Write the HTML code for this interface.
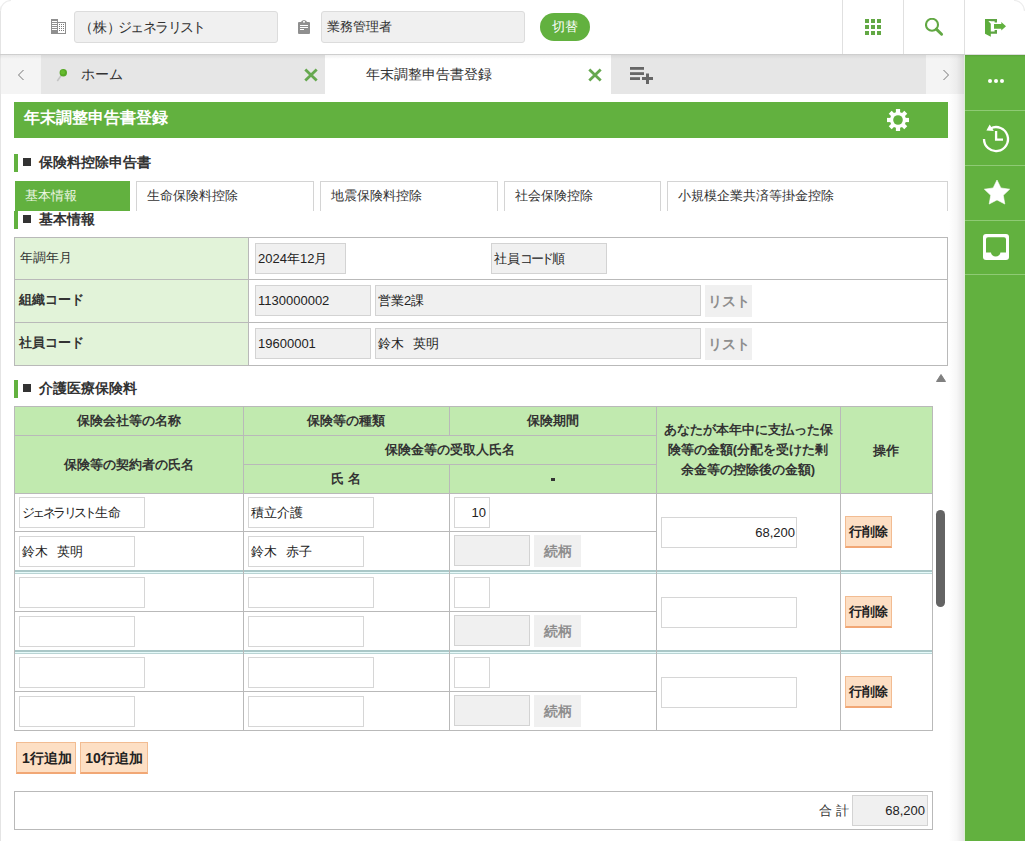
<!DOCTYPE html>
<html><head><meta charset="utf-8">
<style>
*{box-sizing:border-box;margin:0;padding:0}
html,body{width:1025px;height:841px;overflow:hidden;background:#fff}
body{font-family:"Liberation Sans",sans-serif;color:#333;font-size:13px;position:relative}
.a{position:absolute}
.t{position:absolute;white-space:nowrap;line-height:1}
/* header */
#hdr{left:0;top:0;width:1025px;height:54px;background:#fff}
.hbox{background:#f0f0f0;border:1px solid #dcdcdc;border-radius:3px;height:32px;top:11px}
.vsep{top:0;width:1px;height:54px;background:#e0e0e0}
/* tabbar */
#tabbar{left:0;top:54px;width:965px;height:40px;background:#e6e6e6}
/* sidebar */
#side{left:965px;top:55px;width:60px;height:786px;background:#62b13f}
.ssep{left:0;width:60px;height:1px;background:#8fca75}
/* content */
.green{background:#62b13f}
.secbar{width:4px;height:18px;background:#62b13f}
.sq{width:8px;height:8px;background:#333}
.sec{font-size:14px;font-weight:bold;color:#333}
.tab{top:181px;height:30px;border:1px solid #d4d4d4;border-bottom:none;background:#fff}
.tb{border-collapse:collapse}
.inp{position:absolute;height:30px;border:1px solid #d6d6d6;background:#fff}
.ginp{position:absolute;height:30px;border:1px solid #d3d3d3;background:#f0f0f0}
.gbtn{position:absolute;height:31px;background:#f0f0f0;color:#999;font-weight:bold;font-size:14px}
.pbtn{position:absolute;background:#fddfc4;border:1px solid #f2bc92;border-bottom:2px solid #f1a775;font-weight:bold;color:#222;font-size:14px}
.hline{position:absolute;height:1px;background:#b9b9b9}
.vline{position:absolute;width:1px;background:#b9b9b9;z-index:1}
.dbl{position:absolute;height:4px;border-top:2px solid #aac7c7;border-bottom:1px solid #b9d4d4;background:#e6fafa}
</style></head><body>

<!-- HEADER -->
<div id="hdr" class="a"></div>
<div class="a" style="left:0;top:0;width:1px;height:841px;background:#e4e4e4"></div>

<!-- company icon -->
<svg class="a" style="left:51px;top:19px" width="16" height="16" viewBox="0 0 16 16" shape-rendering="crispEdges">
<rect x="0" y="0" width="7" height="15" fill="#8f8f8f"/>
<g fill="#fff"><rect x="1" y="2" width="5" height="1"/><rect x="1" y="4" width="5" height="1"/><rect x="1" y="6" width="5" height="1"/><rect x="1" y="8" width="5" height="1"/><rect x="1" y="10" width="5" height="1"/></g>
<path d="M7 3H15V15H7Z M7 4V14H14V4Z" fill="#8f8f8f" fill-rule="evenodd"/>
<g fill="#7a7a7a"><rect x="8" y="5" width="1" height="1"/><rect x="10" y="5" width="1" height="1"/><rect x="12" y="5" width="1" height="1"/><rect x="8" y="7" width="1" height="1"/><rect x="10" y="7" width="1" height="1"/><rect x="12" y="7" width="1" height="1"/><rect x="8" y="9" width="1" height="1"/><rect x="10" y="9" width="1" height="1"/><rect x="12" y="9" width="1" height="1"/><rect x="8" y="11" width="1" height="1"/><rect x="10" y="11" width="1" height="1"/><rect x="12" y="11" width="1" height="1"/></g>
</svg>
<div class="a hbox" style="left:74px;width:204px"></div>
<div class="t" style="left:79px;top:20px;font-size:14px;color:#333">（株）<span style="letter-spacing:-1.6px;margin-left:-3px">ジェネラリスト</span></div>

<!-- clipboard icon -->
<svg class="a" style="left:298px;top:20px" width="12" height="14" viewBox="0 0 12 14">
<rect x="0" y="2" width="12" height="12" rx="1" fill="#8f8f8f"/>
<path d="M2.6 2.6Q3.6 0 6 0Q8.4 0 9.4 2.6Z" fill="#8f8f8f"/>
<rect x="5.1" y="1" width="1.8" height="1.6" fill="#fff"/>
<g fill="#fff" shape-rendering="crispEdges"><rect x="2" y="5" width="8" height="1"/><rect x="2" y="7" width="8" height="1"/><rect x="2" y="9" width="4" height="1"/></g>
</svg>
<div class="a hbox" style="left:321px;width:204px"></div>
<div class="t" style="left:327px;top:20px;font-size:13px;color:#333">業務管理者</div>

<div class="a" style="left:540px;top:13px;width:50px;height:28px;border-radius:14px;background:#62b13f"></div>
<div class="t" style="left:552px;top:20px;font-size:13px;color:#fff">切替</div>

<div class="a vsep" style="left:842px"></div>
<div class="a vsep" style="left:903px"></div>
<div class="a vsep" style="left:964px"></div>

<!-- grid icon -->
<svg class="a" style="left:865px;top:19px" width="16" height="16" viewBox="0 0 16 16" fill="#62a844">
<rect x="0" y="0" width="4" height="4"/><rect x="6" y="0" width="4" height="4"/><rect x="12" y="0" width="4" height="4"/>
<rect x="0" y="6" width="4" height="4"/><rect x="6" y="6" width="4" height="4"/><rect x="12" y="6" width="4" height="4"/>
<rect x="0" y="12" width="4" height="4"/><rect x="6" y="12" width="4" height="4"/><rect x="12" y="12" width="4" height="4"/>
</svg>
<!-- search icon -->
<svg class="a" style="left:925px;top:18px" width="19" height="19" viewBox="0 0 19 19">
<circle cx="7" cy="6.8" r="6" fill="none" stroke="#62a844" stroke-width="2.1"/>
<line x1="11.3" y1="11.1" x2="16.6" y2="16.3" stroke="#62a844" stroke-width="2.9" stroke-linecap="round"/>
</svg>
<!-- exit icon -->
<svg class="a" style="left:985px;top:19px" width="22" height="19" viewBox="0 0 22 19">
<path d="M0 0H12V3.6H9.6V2.3H2V12.4H9.6V11H12V14.7H4Z" fill="#5ea443"/><path d="M2 2.3H5.8V4.8Z" fill="#fff"/>
<path d="M0 0H1.6L5.8 4.8V17.7L0 14.7Z" fill="#5cac3c"/>
<path d="M9 5H16.3V3L21 7.3L16.3 11.6V9.7H9Z" fill="#62b13f"/>
</svg>
<!-- TABBAR -->
<div id="tabbar" class="a"></div>
<div class="a" style="left:1px;top:55px;width:40px;height:39px;background:#f4f4f4"></div>
<svg class="a" style="left:17px;top:69px" width="8" height="12" viewBox="0 0 8 12"><path d="M6.5 1L1.5 6L6.5 11" fill="none" stroke="#777" stroke-width="1"/></svg>
<!-- pin -->
<svg class="a" style="left:56px;top:68px" width="13" height="14" viewBox="0 0 13 14">
<line x1="1.3" y1="13" x2="5.5" y2="7" stroke="#c4c4c4" stroke-width="1.6"/>
<circle cx="7.3" cy="4.8" r="3.7" fill="#56a825"/><circle cx="6.8" cy="4.2" r="2.2" fill="#66bb2e"/>
</svg>
<div class="t" style="left:81px;top:67px;font-size:14px;color:#333">ホーム</div>
<svg class="a" style="left:304px;top:68px" width="14" height="14" viewBox="0 0 14 14"><path d="M1.3 1.5L12.7 12.5M12.7 1.5L1.3 12.5" stroke="#66a84f" stroke-width="2.8"/></svg>
<div class="a" style="left:325px;top:55px;width:286px;height:39px;background:#fff"></div>
<div class="t" style="left:366px;top:67px;font-size:14px;color:#333">年末調整申告書登録</div>
<svg class="a" style="left:588px;top:68px" width="14" height="14" viewBox="0 0 14 14"><path d="M1.3 1.5L12.7 12.5M12.7 1.5L1.3 12.5" stroke="#66a84f" stroke-width="2.8"/></svg>
<!-- add tab icon -->
<svg class="a" style="left:630px;top:67px" width="23" height="17" viewBox="0 0 23 17" fill="#666">
<rect x="0" y="0" width="14" height="2.8"/><rect x="0" y="5.2" width="14" height="2.8"/><rect x="0" y="10.2" width="10" height="2.8"/>
<rect x="12" y="10" width="11" height="3"/><rect x="16" y="6.5" width="3" height="10.5"/>
</svg>
<div class="a" style="left:926px;top:55px;width:39px;height:39px;background:#f4f4f4"></div>
<svg class="a" style="left:942px;top:69px" width="8" height="12" viewBox="0 0 8 12"><path d="M1.5 1L6.5 6L1.5 11" fill="none" stroke="#777" stroke-width="1"/></svg>

<div class="a" style="left:0;top:54px;width:965px;height:5px;background:linear-gradient(rgba(0,0,0,0.13),rgba(0,0,0,0.05) 30%,rgba(0,0,0,0))"></div>
<!-- SIDEBAR -->
<div class="a" style="left:949px;top:55px;width:15px;height:786px;background:linear-gradient(90deg,rgba(0,0,0,0),rgba(0,0,0,0.03) 50%,rgba(0,0,0,0.11))"></div>
<div class="a" style="left:964px;top:55px;width:1px;height:786px;background:#dcefd4"></div>
<div id="side" class="a">
 <div class="a ssep" style="top:55px"></div>
 <div class="a ssep" style="top:110px"></div>
 <div class="a ssep" style="top:165px"></div>
 <div class="a ssep" style="top:219px"></div>
</div>
<svg class="a" style="left:988px;top:79px" width="16" height="4" viewBox="0 0 16 4" fill="#fff"><circle cx="2" cy="2" r="2"/><circle cx="8" cy="2" r="2"/><circle cx="14" cy="2" r="2"/></svg>
<svg class="a" style="left:978px;top:118px" width="36" height="40" viewBox="0 0 36 40">
<path d="M6 21A12 12 0 1 0 12.5 10.4" fill="none" stroke="#fff" stroke-width="2.3"/>
<path d="M11.7 6.5L8.4 12.6L15.8 13Z" fill="#fff"/>
<path d="M18.1 13V21.7H25" fill="none" stroke="#fff" stroke-width="2.3"/>
</svg>
<svg class="a" style="left:984px;top:180px" width="26" height="25" viewBox="0 0 26 25"><polygon points="13.00,0.00 16.88,7.96 25.65,9.19 19.28,15.34 20.82,24.06 13.00,19.90 5.18,24.06 6.72,15.34 0.35,9.19 9.12,7.96" fill="#fff" stroke="#fff" stroke-width="0.6" stroke-linejoin="round"/></svg>
<svg class="a" style="left:983px;top:234px" width="26" height="26" viewBox="0 0 26 26">
<rect x="0" y="0" width="26" height="26" rx="3" fill="#fff"/>
<path d="M5 3.2H21A2 2 0 0 1 23 5.2V18.5H17.4A4.7 4 0 0 1 8 18.5H3V5.2A2 2 0 0 1 5 3.2Z" fill="#62b13f"/>
</svg>

<svg class="a" style="left:0;top:0" width="12" height="12" viewBox="0 0 12 12"><path d="M0 0H10A10 10 0 0 0 0 10Z" fill="#fff"/><path d="M0.5 11A10.5 10.5 0 0 1 11 0.5" fill="none" stroke="#ededed" stroke-width="1.2"/></svg>
<svg class="a" style="left:1013px;top:0" width="12" height="12" viewBox="0 0 12 12"><path d="M12 0H2A10 10 0 0 1 12 10Z" fill="#fff"/><path d="M1 0.5A10.5 10.5 0 0 1 11.5 11" fill="none" stroke="#ededed" stroke-width="1.2"/></svg>
<div class="a" style="left:965px;top:54px;width:60px;height:3px;background:linear-gradient(rgba(0,0,0,0.16),rgba(0,0,0,0))"></div>
<!-- CONTENT -->
<div class="a green" style="left:14px;top:102px;width:934px;height:36px"></div>
<div class="t" style="left:24px;top:110px;font-size:16px;font-weight:bold;color:#fff">年末調整申告書登録</div>
<svg class="a" style="left:887px;top:109px" width="22" height="22" viewBox="0 0 22 22">
<g fill="#fff"><rect x="8.9" y="0" width="4.2" height="22"/><rect x="8.9" y="0" width="4.2" height="22" transform="rotate(90 11 11)"/>
<rect x="8.9" y="0" width="4.2" height="22" transform="rotate(45 11 11)"/><rect x="8.9" y="0" width="4.2" height="22" transform="rotate(-45 11 11)"/>
<circle cx="11" cy="11" r="8"/></g>
<circle cx="11" cy="11" r="4.8" fill="#62b13f"/>
</svg>

<div class="a secbar" style="left:14px;top:154px"></div>
<div class="a sq" style="left:23px;top:158px"></div>
<div class="t sec" style="left:39px;top:155px">保険料控除申告書</div>

<div class="a green" style="left:15px;top:181px;width:115px;height:30px"></div>
<div class="t" style="left:25px;top:189px;font-size:13px;color:#eef7e6">基本情報</div>
<div class="a tab" style="left:136px;width:178px"></div>
<div class="t" style="left:147px;top:189px;font-size:13px;color:#333">生命保険料控除</div>
<div class="a tab" style="left:320px;width:178px"></div>
<div class="t" style="left:331px;top:189px;font-size:13px;color:#333">地震保険料控除</div>
<div class="a tab" style="left:504px;width:157px"></div>
<div class="t" style="left:515px;top:189px;font-size:13px;color:#333">社会保険控除</div>
<div class="a tab" style="left:667px;width:281px"></div>
<div class="t" style="left:678px;top:189px;font-size:13px;color:#333">小規模企業共済等掛金控除</div>

<div class="a secbar" style="left:14px;top:211px"></div>
<div class="a sq" style="left:23px;top:215px"></div>
<div class="t sec" style="left:39px;top:212px">基本情報</div>

<!-- TABLE 1 -->
<div class="a" style="left:15px;top:238px;width:233px;height:127px;background:#e2f3d9"></div>
<div class="hline" style="left:14px;top:237px;width:934px"></div>
<div class="hline" style="left:14px;top:279px;width:934px"></div>
<div class="hline" style="left:14px;top:322px;width:934px"></div>
<div class="hline" style="left:14px;top:365px;width:934px"></div>
<div class="vline" style="left:14px;top:237px;height:129px"></div>
<div class="vline" style="left:248px;top:237px;height:129px"></div>
<div class="vline" style="left:947px;top:237px;height:129px"></div>
<div class="t" style="left:20px;top:251px;font-size:13px;color:#333">年調年月</div>
<div class="t" style="left:19px;top:293px;font-size:13px;font-weight:bold;color:#333">組織コード</div>
<div class="t" style="left:19px;top:336px;font-size:13px;font-weight:bold;color:#333">社員コード</div>
<div class="ginp" style="left:255px;top:243px;width:91px;height:31px"></div>
<div class="t" style="left:258px;top:251.5px;font-size:13px;color:#222">2024年12月</div>
<div class="ginp" style="left:491px;top:243px;width:116px;height:31px"></div>
<div class="t" style="left:494px;top:251.5px;font-size:13px;color:#222">社員<span style="letter-spacing:-2.5px">コード</span>順</div>
<div class="ginp" style="left:255px;top:285px;width:116px;height:31px"></div>
<div class="t" style="left:258px;top:294.0px;font-size:13px;color:#222">1130000002</div>
<div class="ginp" style="left:375px;top:285px;width:326px;height:31px"></div>
<div class="t" style="left:378px;top:294.0px;font-size:13px;color:#222">営業2課</div>
<div class="gbtn" style="left:705px;top:285px;width:47px;height:32px"></div>
<div class="t" style="left:705px;width:47px;text-align:center;top:294.0px;font-size:14px;font-weight:bold;color:#8e8e8e">リスト</div>
<div class="ginp" style="left:255px;top:328px;width:116px;height:31px"></div>
<div class="t" style="left:258px;top:336.5px;font-size:13px;color:#222">19600001</div>
<div class="ginp" style="left:375px;top:328px;width:326px;height:31px"></div>
<div class="t" style="left:378px;top:336.5px;font-size:13px;color:#222">鈴木<span style="letter-spacing:-4px">　</span>英明</div>
<div class="gbtn" style="left:705px;top:328px;width:47px;height:32px"></div>
<div class="t" style="left:705px;width:47px;text-align:center;top:336.5px;font-size:14px;font-weight:bold;color:#8e8e8e">リスト</div>
<div class="a secbar" style="left:14px;top:380px"></div>
<div class="a sq" style="left:23px;top:384px"></div>
<div class="t sec" style="left:39px;top:381px">介護医療保険料</div>
<svg class="a" style="left:936px;top:374px" width="10" height="8" viewBox="0 0 10 8"><path d="M5 0.5L9.5 7.5H0.5Z" fill="#808080" stroke="#808080" stroke-linejoin="round"/></svg>
<div class="a" style="left:14px;top:406px;width:919px;height:87px;background:#c1eaaf"></div>
<div class="hline" style="left:14px;top:406px;width:919px"></div>
<div class="hline" style="left:14px;top:435px;width:643px"></div>
<div class="hline" style="left:243px;top:464px;width:414px"></div>
<div class="hline" style="left:14px;top:493px;width:919px"></div>
<div class="vline" style="left:14px;top:406px;height:325px"></div>
<div class="vline" style="left:243px;top:406px;height:325px"></div>
<div class="vline" style="left:656px;top:406px;height:325px"></div>
<div class="vline" style="left:840px;top:406px;height:325px"></div>
<div class="vline" style="left:932px;top:406px;height:325px"></div>
<div class="vline" style="left:449px;top:406px;height:29px"></div>
<div class="vline" style="left:449px;top:464px;height:267px"></div>
<div class="t" style="left:14px;width:229px;text-align:center;top:414px;font-size:13px;font-weight:bold;color:#333">保険会社等の名称</div>
<div class="t" style="left:243px;width:206px;text-align:center;top:414px;font-size:13px;font-weight:bold;color:#333">保険等の種類</div>
<div class="t" style="left:449px;width:207px;text-align:center;top:414px;font-size:13px;font-weight:bold;color:#333">保険期間</div>
<div class="t" style="left:14px;width:229px;text-align:center;top:457.5px;font-size:13px;font-weight:bold;color:#333">保険等の契約者の氏名</div>
<div class="t" style="left:243px;width:413px;text-align:center;top:443px;font-size:13px;font-weight:bold;color:#333">保険金等の受取人氏名</div>
<div class="t" style="left:243px;width:206px;text-align:center;top:472px;font-size:13px;font-weight:bold;color:#333">氏 名</div>
<div class="a" style="left:551px;top:478px;width:4px;height:3px;background:#333"></div>
<div class="t" style="left:656px;width:184px;text-align:center;top:422.5px;font-size:13px;font-weight:bold;color:#333">あなたが本年中に支払った保</div>
<div class="t" style="left:656px;width:184px;text-align:center;top:442.5px;font-size:13px;font-weight:bold;color:#333">険等の金額(分配を受けた剰</div>
<div class="t" style="left:656px;width:184px;text-align:center;top:462.5px;font-size:13px;font-weight:bold;color:#333">余金等の控除後の金額)</div>
<div class="t" style="left:840px;width:92px;text-align:center;top:443.5px;font-size:13px;font-weight:bold;color:#333">操作</div>
<div class="hline" style="left:14px;top:531px;width:643px"></div>
<div class="dbl" style="left:14px;top:570px;width:919px"></div>
<div class="inp" style="left:19px;top:497px;width:126px;height:31px"></div>
<div class="t" style="left:22px;top:505.5px;font-size:13px;color:#222"><span style="letter-spacing:-2.6px">ジェネラリスト</span>生命</div>
<div class="inp" style="left:19px;top:536px;width:116px;height:31px"></div>
<div class="t" style="left:22px;top:544.5px;font-size:13px;color:#222">鈴木<span style="letter-spacing:-4px">　</span>英明</div>
<div class="inp" style="left:248px;top:497px;width:126px;height:31px"></div>
<div class="t" style="left:251px;top:505.5px;font-size:13px;color:#222">積立介護</div>
<div class="inp" style="left:248px;top:536px;width:116px;height:31px"></div>
<div class="t" style="left:251px;top:544.5px;font-size:13px;color:#222">鈴木<span style="letter-spacing:-4px">　</span>赤子</div>
<div class="inp" style="left:454px;top:497px;width:36px;height:31px"></div>
<div class="t" style="right:539px;top:505.5px;font-size:13px;color:#222">10</div>
<div class="ginp" style="left:454px;top:535px;width:76px;height:31px"></div>
<div class="gbtn" style="left:534px;top:535px;width:47px;height:32px"></div>
<div class="t" style="left:534px;width:47px;text-align:center;top:543.5px;font-size:14px;font-weight:bold;color:#8e8e8e">続柄</div>
<div class="inp" style="left:661px;top:517px;width:136px;height:31px"></div>
<div class="t" style="right:230px;top:526px;font-size:13px;color:#222">68,200</div>
<div class="pbtn" style="left:845px;top:516px;width:47px;height:32px"></div>
<div class="t" style="left:845px;width:47px;text-align:center;top:525px;font-size:13px;font-weight:bold;color:#222">行削除</div>
<div class="hline" style="left:14px;top:611px;width:643px"></div>
<div class="dbl" style="left:14px;top:650px;width:919px"></div>
<div class="inp" style="left:19px;top:577px;width:126px;height:31px"></div>
<div class="inp" style="left:19px;top:616px;width:116px;height:31px"></div>
<div class="inp" style="left:248px;top:577px;width:126px;height:31px"></div>
<div class="inp" style="left:248px;top:616px;width:116px;height:31px"></div>
<div class="inp" style="left:454px;top:577px;width:36px;height:31px"></div>
<div class="ginp" style="left:454px;top:615px;width:76px;height:31px"></div>
<div class="gbtn" style="left:534px;top:615px;width:47px;height:32px"></div>
<div class="t" style="left:534px;width:47px;text-align:center;top:623.5px;font-size:14px;font-weight:bold;color:#8e8e8e">続柄</div>
<div class="inp" style="left:661px;top:597px;width:136px;height:31px"></div>
<div class="pbtn" style="left:845px;top:596px;width:47px;height:32px"></div>
<div class="t" style="left:845px;width:47px;text-align:center;top:605px;font-size:13px;font-weight:bold;color:#222">行削除</div>
<div class="hline" style="left:14px;top:691px;width:643px"></div>
<div class="hline" style="left:14px;top:730px;width:919px"></div>
<div class="inp" style="left:19px;top:657px;width:126px;height:31px"></div>
<div class="inp" style="left:19px;top:696px;width:116px;height:31px"></div>
<div class="inp" style="left:248px;top:657px;width:126px;height:31px"></div>
<div class="inp" style="left:248px;top:696px;width:116px;height:31px"></div>
<div class="inp" style="left:454px;top:657px;width:36px;height:31px"></div>
<div class="ginp" style="left:454px;top:695px;width:76px;height:31px"></div>
<div class="gbtn" style="left:534px;top:695px;width:47px;height:32px"></div>
<div class="t" style="left:534px;width:47px;text-align:center;top:703.5px;font-size:14px;font-weight:bold;color:#8e8e8e">続柄</div>
<div class="inp" style="left:661px;top:677px;width:136px;height:31px"></div>
<div class="pbtn" style="left:845px;top:676px;width:47px;height:32px"></div>
<div class="t" style="left:845px;width:47px;text-align:center;top:685px;font-size:13px;font-weight:bold;color:#222">行削除</div>
<div class="a" style="left:936px;top:510px;width:9px;height:97px;border-radius:5px;background:#646464"></div>
<div class="pbtn" style="left:16px;top:742px;width:60px;height:32px"></div>
<div class="t" style="left:17px;width:60px;text-align:center;top:751px;font-size:14px;font-weight:bold;color:#222">1行追加</div>
<div class="pbtn" style="left:80px;top:742px;width:68px;height:32px"></div>
<div class="t" style="left:80px;width:68px;text-align:center;top:751px;font-size:14px;font-weight:bold;color:#222">10行追加</div>
<div class="a" style="left:14px;top:791px;width:919px;height:39px;border:1px solid #b9b9b9"></div>
<div class="t" style="left:819px;top:804px;font-size:13px;color:#333">合</div><div class="t" style="left:836px;top:804px;font-size:13px;color:#333">計</div>
<div class="ginp" style="left:852px;top:795px;width:76px;height:31px"></div>
<div class="t" style="right:100px;top:804px;font-size:13px;color:#222">68,200</div>
</body></html>
